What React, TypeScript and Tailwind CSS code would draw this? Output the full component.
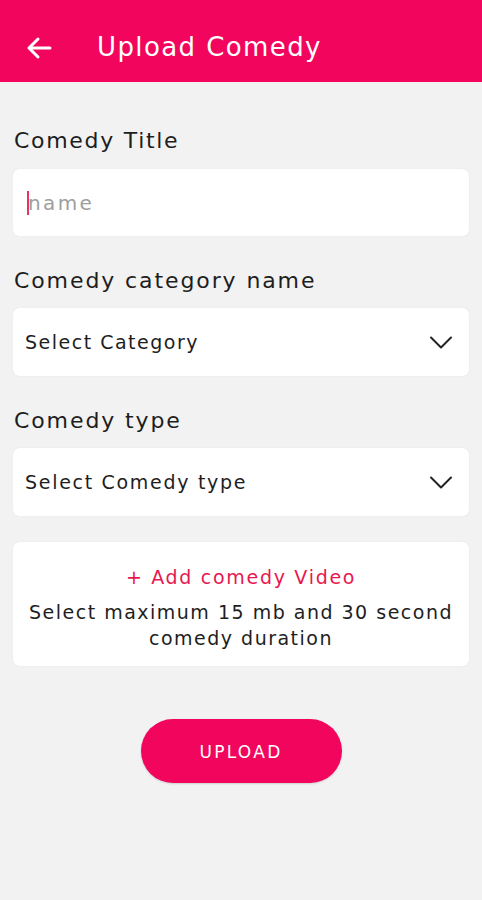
import React from "react";

const font = { fontFamily: '"DejaVu Sans", "Open Sans", sans-serif' };

function Chevron() {
  return (
    <svg width="24" height="15" viewBox="0 0 24 15" fill="none" stroke="#222" strokeWidth="2" strokeLinecap="round" strokeLinejoin="round">
      <path d="M2 2.5 L12 12.5 L22 2.5" />
    </svg>
  );
}

export default function App() {
  return (
    <div className="w-[482px] h-[900px] bg-[#f2f2f2] flex flex-col" style={font}>
      <div className="h-[82px] bg-[#f2055c] flex items-center pl-[26px] pt-[13px]">
        <svg width="26" height="24" viewBox="0 0 26 24" fill="none" stroke="white" strokeWidth="3" strokeLinecap="round" strokeLinejoin="round">
          <path d="M24 12 H3 M12 3 L3 12 L12 21" />
        </svg>
        <span className="ml-[45px] text-white text-[26px] tracking-[1.4px]">Upload Comedy</span>
      </div>
      <div className="px-[13px] flex flex-col">
        <div className="mt-[45px] pl-[1px] text-[22px] text-[#1e1e1e] leading-[28px] tracking-[1.7px]">Comedy Title</div>
        <div className="mt-[14px] h-[67px] bg-white rounded-[6px] flex items-center pl-[14px] shadow-[0_0_1px_rgba(0,0,0,0.15)]">
          <div className="w-[2px] h-[24px] bg-[#e8345f]" />
          <span className="text-[20px] text-[#9e9e9e] tracking-[2.4px] -ml-[1px]">name</span>
        </div>
        <div className="mt-[31px] pl-[1px] text-[22px] text-[#1e1e1e] leading-[28px] tracking-[1.9px]">Comedy category name</div>
        <div className="mt-[13px] h-[68px] bg-white rounded-[6px] flex items-center justify-between pl-[12px] pr-[16px] shadow-[0_0_1px_rgba(0,0,0,0.15)]">
          <span className="text-[19px] text-[#1e1e1e] tracking-[1.5px]">Select Category</span>
          <Chevron />
        </div>
        <div className="mt-[31px] pl-[1px] text-[22px] text-[#1e1e1e] leading-[28px] tracking-[1.9px]">Comedy type</div>
        <div className="mt-[13px] h-[68px] bg-white rounded-[6px] flex items-center justify-between pl-[12px] pr-[16px] shadow-[0_0_1px_rgba(0,0,0,0.15)]">
          <span className="text-[19px] text-[#1e1e1e] tracking-[1.7px]">Select Comedy type</span>
          <Chevron />
        </div>
        <div className="mt-[26px] h-[124px] bg-white rounded-[6px] flex flex-col items-center pt-[22px] shadow-[0_0_1px_rgba(0,0,0,0.15)]">
          <div className="text-[19px] text-[#e8174f] tracking-[1.7px] leading-[26px]">+ Add comedy Video</div>
          <div className="mt-[9px] text-[19px] text-[#1e1e1e] tracking-[1.5px] leading-[26px] text-center whitespace-nowrap">
            Select maximum 15 mb and 30 second<br />comedy duration
          </div>
        </div>
        <div className="mt-[53px] flex justify-center">
          <div className="w-[201px] h-[64px] rounded-full bg-[#f2055c] flex items-center justify-center pt-[3px] text-white text-[17px] font-medium tracking-[2.3px] shadow-[0_1px_2px_rgba(0,0,0,0.15)]">
            UPLOAD
          </div>
        </div>
      </div>
    </div>
  );
}
